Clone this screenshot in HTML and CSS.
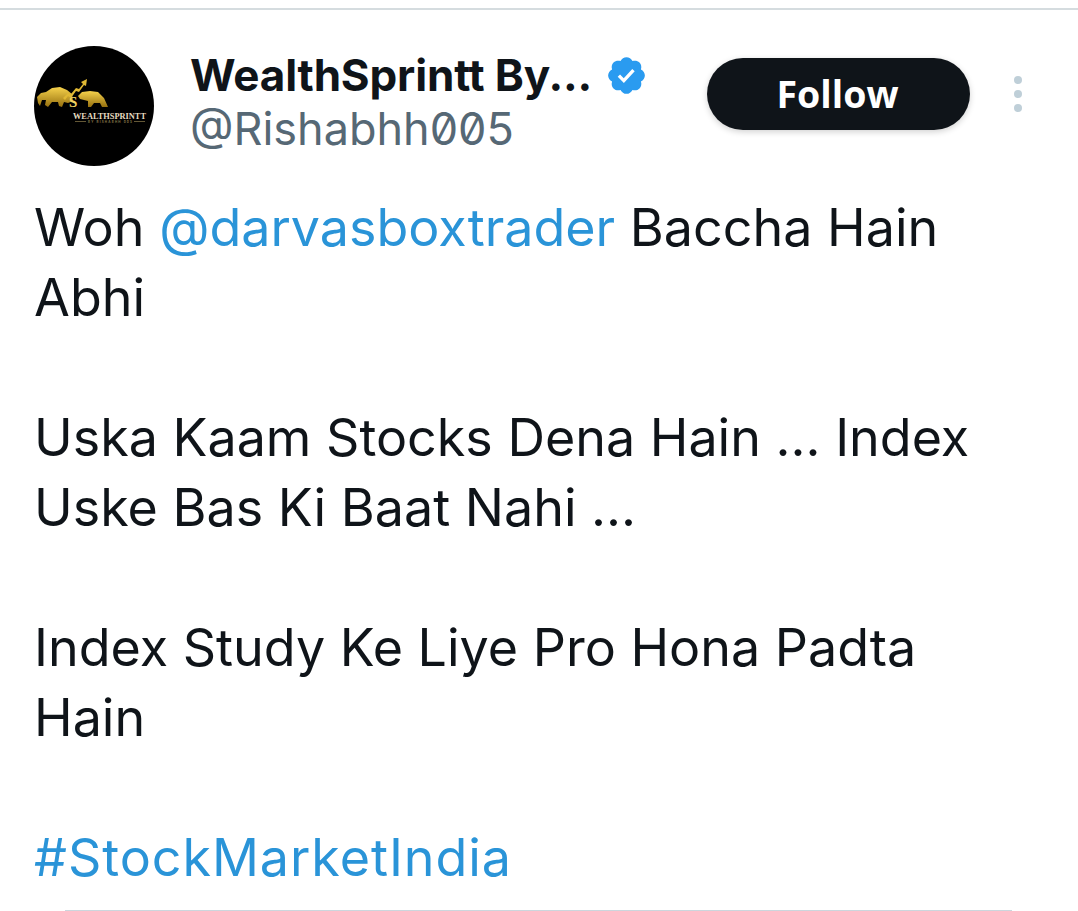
FILE: index.html
```html
<!DOCTYPE html>
<html lang="en">
<head>
<meta charset="utf-8">
<title>Tweet</title>
<link rel="stylesheet" href="styles.css">
</head>
<body>
<div class="top-rule"></div>
<article class="tweet">
  <header class="head">
    <div class="avatar">
      <svg viewBox="0 0 120 120" width="120" height="120">
        <defs>
          <linearGradient id="gold" x1="0" y1="0" x2="0" y2="1">
            <stop offset="0" stop-color="#f6d24c"/>
            <stop offset="1" stop-color="#96700f"/>
          </linearGradient>
        </defs>
        <circle cx="60" cy="60" r="60" fill="#000"/>
        <path d="M3 51 L7 47 L12 46 L18 42 L26 41 L33 44 L38 48 L39 55 L34 57 L30 56 L28 61 L25 60 L24 56 L18 56 L14 61 L11 59 L12 54 L8 54 L6 60 L4 57 Z" fill="url(#gold)"/>
        <path d="M44 50 L48 46 L56 45 L64 46 L70 52 L74 61 L68 61 L66 57 L60 57 L57 61 L54 61 L54 55 L50 54 L46 53 Z" fill="url(#gold)"/>
        <path d="M29 52 L34 47 L37 48 L42 42 L45 43 L49 38 L47 36 L53 33 L52 40 L50 39 L45 46 L42 45 L37 52 L34 50 L31 54 Z" fill="#e0b834"/>
        <text x="35" y="61" class="logo-s">S</text>
        <text x="39" y="73" class="logo-name" textLength="73" lengthAdjust="spacingAndGlyphs">WEALTHSPRINTT</text>
        <path d="M41 75.500H52M100 75.500H111" stroke="#7d6e44" stroke-width=".8"/>
        <text x="54" y="76.500" class="logo-sub" textLength="44">BY RISHABHH 005</text>
      </svg>
    </div>
    <div class="who">
      <div class="name-row">
        <span class="name">WealthSprintt By...</span>
        <svg class="badge" viewBox="0 0 24 24" width="43" height="43">
          <path fill="#2a9bf0" d="M22.25 12c0-1.430-.88-2.670-2.190-3.340.46-1.390.2-2.900-.81-3.910s-2.520-1.270-3.910-.81c-.66-1.310-1.910-2.190-3.340-2.190s-2.670.88-3.330 2.190c-1.400-.46-2.910-.2-3.920.81s-1.260 2.520-.8 3.910c-1.310.67-2.200 1.910-2.200 3.340s.89 2.670 2.200 3.340c-.46 1.390-.21 2.900.8 3.910s2.520 1.260 3.910.81c.67 1.310 1.910 2.190 3.340 2.190s2.680-.88 3.340-2.190c1.390.45 2.900.2 3.910-.81s1.270-2.520.81-3.910c1.310-.67 2.190-1.910 2.190-3.340z"/>
          <path fill="#fff" d="M10.540 16.200 7.100 12.760l1.300-1.320 2.060 2.060 4.750-5.180 1.370 1.250z"/>
        </svg>
      </div>
      <div class="handle">@Rishabhh005</div>
    </div>
    <button class="follow">Follow</button>
    <div class="more"><i></i><i></i><i></i></div>
  </header>
  <div class="body">
    <p>Woh <a>@darvasboxtrader</a> Baccha Hain<br>Abhi</p>
    <p>Uska Kaam Stocks Dena Hain ... Index<br>Uske Bas Ki Baat Nahi ...</p>
    <p>Index Study Ke Liye Pro Hona Padta<br>Hain</p>
    <p><a class="tag">#StockMarketIndia</a></p>
  </div>
  <div class="bottom-rule"></div>
</article>
</body>
</html>
```
FILE: styles.css
```css
html, body { margin: 0; padding: 0; background: #fff; }
body { width: 1078px; height: 911px; overflow: hidden; padding-top: 8px; box-sizing: border-box; font-family: Inter, "Liberation Sans", sans-serif; color: #0f1419; }
.top-rule { height: 2px; background: #d5dcdf; }
.tweet { padding: 36px 0 0 34px; }
.head { display: flex; align-items: flex-start; height: 120px; }
.avatar { width: 120px; height: 120px; flex: none; }
.avatar svg { display: block; overflow: visible; }
.logo-s { font: 700 15px "Liberation Serif", serif; fill: #f0d060; }
.logo-name { font: 700 7.500px "Liberation Serif", serif; fill: #e8dcc0; }
.logo-sub { font: 700 3px Inter, sans-serif; fill: #8a7a4a; }
.who { margin-left: 37px; width: 516px; flex: none; }
.name-row { display: flex; align-items: center; height: 58px; }
.name { font-size: 44px; font-weight: 700; line-height: 58px; letter-spacing: -.16px; margin-left: -1px; }
.badge { margin-left: 13px; }
.handle { font-size: 45px; line-height: 50px; color: #566875; font-feature-settings: "zero"; margin-left: -1px; }
.follow { width: 263px; height: 72px; margin-top: 12px; border: 0; border-radius: 36px; background: #0f1419; color: #fff; font: 700 37.500px "Open Sans", sans-serif; padding: 0 2px 2px 0; box-shadow: 0 2px 6px rgba(0,0,0,.18); flex: none; }
.more { display: flex; flex-direction: column; gap: 6px; margin: 30px 0 0 44px; }
.more i { display: block; width: 8px; height: 8px; border-radius: 50%; background: #bfcfd8; }
.body { margin-top: 27px; font-size: 52px; line-height: 70px; color: #0f1419; }
.body p { margin: 0 0 70px; }
.body p:last-child { margin-bottom: 0; }
.body a { color: #2a94d8; }
.body .tag { letter-spacing: .95px; }
.bottom-rule { width: 947px; height: 2px; margin: 17px 0 0 31px; background: #ccd6dd; }
```
